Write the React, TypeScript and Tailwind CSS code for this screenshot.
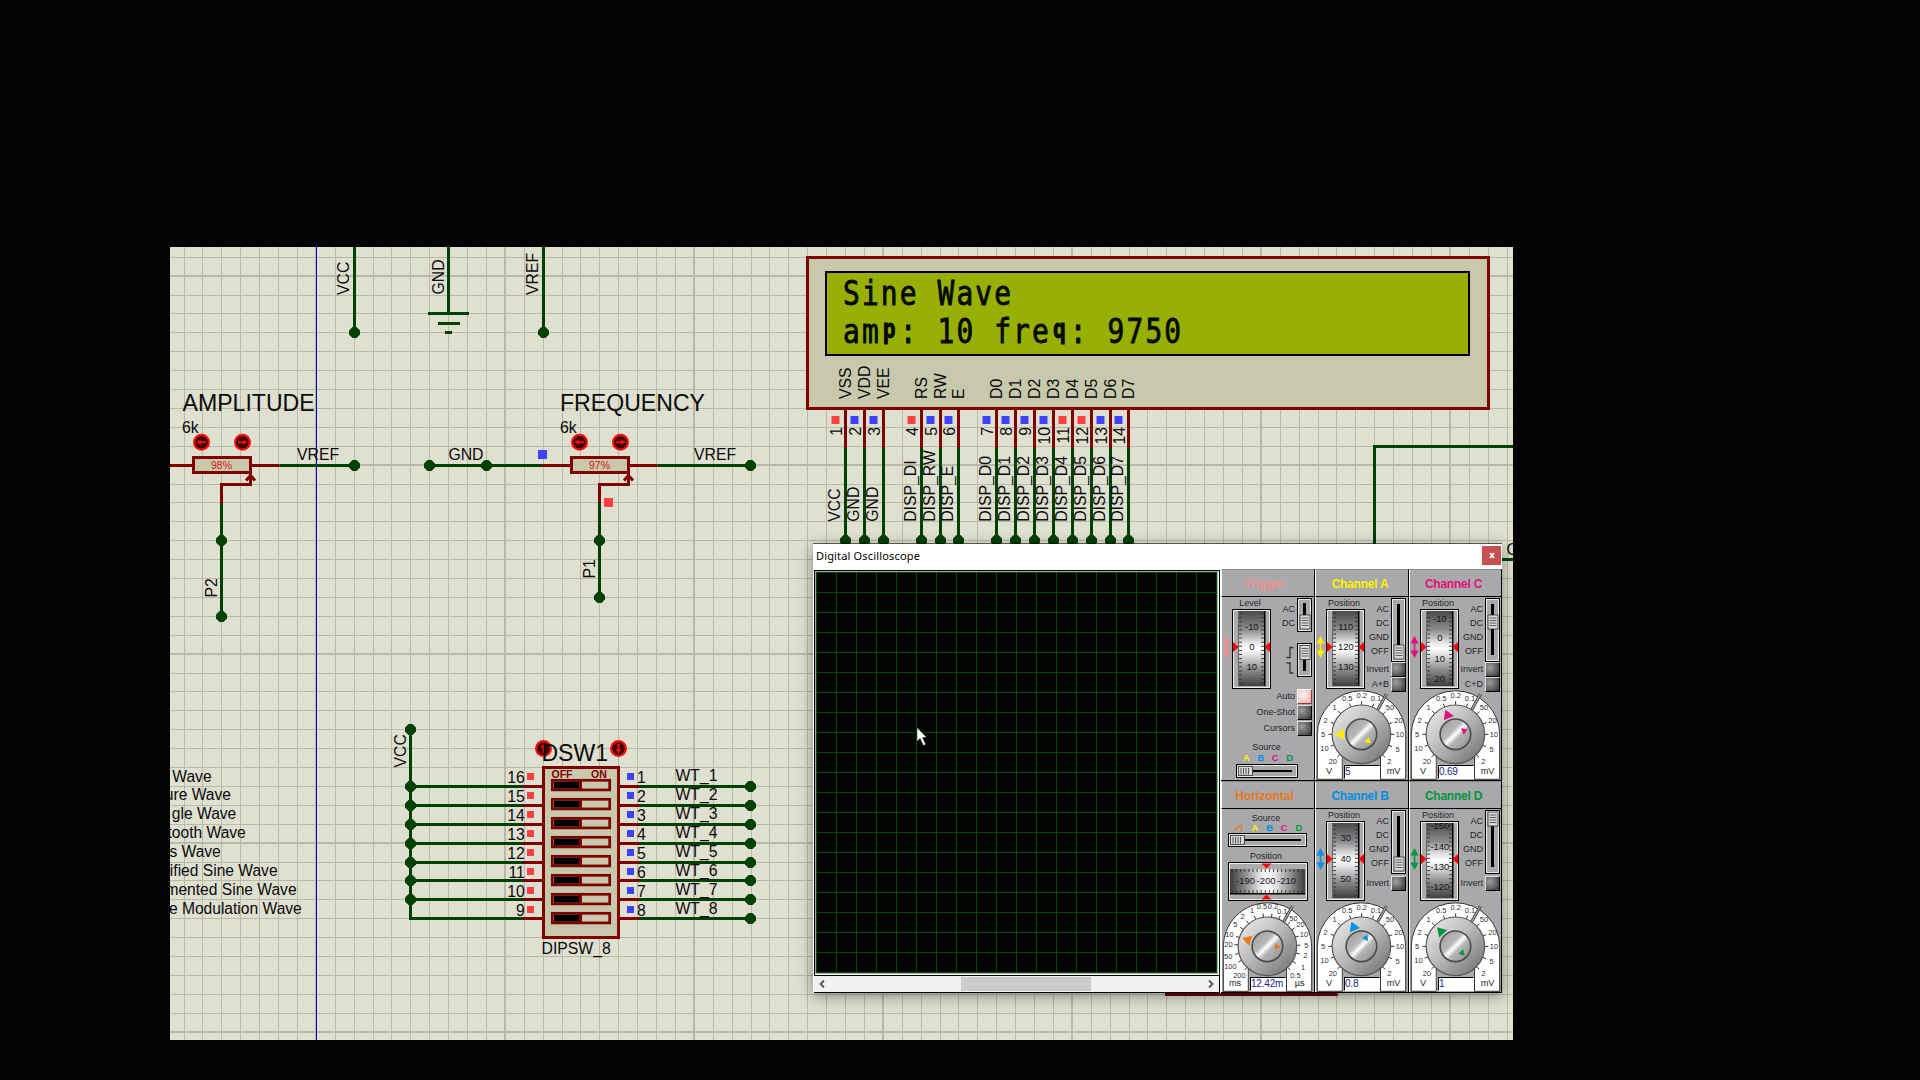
import React from "react";

const WIRE = "#004000";
const COMP = "#800000";
const BODY = "#c8c8ac";
const HI = "#ff4040";
const LO = "#4040ff";

/* ---------- schematic primitives ---------- */

type LabelProps = {
  x: number;
  y: number;
  children: string;
  size?: number;
  up?: boolean;
  anchor?: "start" | "middle" | "end";
  fill?: string;
  bold?: boolean;
};

function Label({ x, y, children, size = 15.8, up, anchor = "start", fill = "#0a0a0a", bold }: LabelProps) {
  return (
    <text
      x={x}
      y={y}
      fontSize={size}
      fill={fill}
      textAnchor={anchor}
      fontWeight={bold ? 700 : 400}
      transform={up ? `rotate(-90 ${x} ${y})` : undefined}
    >
      {children}
    </text>
  );
}

function Wire({ d, color = WIRE }: { d: string; color?: string }) {
  return <path d={d} fill="none" stroke={color} strokeWidth={3} />;
}

function Dot({ x, y }: { x: number; y: number }) {
  return <path d={`M${x - 2} ${y - 5.5}h4l3.5 3.5v4l-3.5 3.5h-4l-3.5 -3.5v-4z`} fill={WIRE} />;
}

function Probe({ x, y, high, s = 8 }: { x: number; y: number; high?: boolean; s?: number }) {
  return <rect x={x} y={y} width={s} height={s} fill={high ? HI : LO} />;
}

function Actuator({ x, y, turn }: { x: number; y: number; turn: number }) {
  return (
    <g>
      <circle cx={x} cy={y} r={7.4} fill="#3c0606" stroke="#ff0a0a" strokeWidth={2.2} />
      <g transform={`rotate(${turn} ${x} ${y})`}>
        <path d={`M${x - 4.5} ${y}h6`} stroke="#ff0a0a" strokeWidth={2} fill="none" />
        <path d={`M${x + 0.8} ${y - 2.8}l4.2 2.8l-4.2 2.8z`} fill="#ff0a0a" />
      </g>
    </g>
  );
}

const GX = [0, 19, 38, 57, 75, 94, 113, 132, 151, 170];
const GY = [0, 19, 37, 56, 75, 94, 113, 132, 151, 170];

function Grid() {
  const out: React.ReactElement[] = [];
  for (let b = 127; b < 1520; b += 189)
    GX.forEach((o, i) => {
      const x = b + o;
      if (x < 170 || x > 1513) return;
      out.push(<rect key={`v${x}`} x={i ? x : x - 1} y={247} width={i ? 1 : 2} height={793} fill="#b9b9a9" />);
    });
  for (let b = 87; b < 1045; b += 189)
    GY.forEach((o, i) => {
      const y = b + o;
      if (y < 247 || y > 1040) return;
      out.push(<rect key={`h${y}`} y={i ? y : y - 1} x={170} height={i ? 1 : 2} width={1343} fill="#b9b9a9" />);
    });
  return <g>{out}</g>;
}

function Pot({ x, name, pct, nameX }: { x: number; name: string; pct: string; nameX: number }) {
  return (
    <g>
      <Wire color={COMP} d={`M${x - 29} 465.5H${x + 58}`} />
      <rect x={x - 28} y={457.5} width={57} height={15} fill={BODY} stroke={COMP} strokeWidth={3} />
      <Label x={x} y={469} size={10.5} anchor="middle" fill="#d81414">{pct}</Label>
      <Wire color={COMP} d={`M${x} 504V484.5H${x + 29}V474M${x + 24.5} 480.5L${x + 29} 475.5L${x + 33.5} 480.5`} />
      <Label x={nameX} y={410.6} size={23.1}>{name}</Label>
      <Label x={x - 39.5} y={433}>6k</Label>
      <Actuator x={x - 20} y={442.3} turn={180} />
      <Actuator x={x + 21} y={442.3} turn={0} />
    </g>
  );
}

const LCD_PINS: [number, string, string, boolean][] = [
  [845.5, "VSS", "VCC", true],
  [864.5, "VDD", "GND", false],
  [883.5, "VEE", "GND", false],
  [921.5, "RS", "DISP_DI", true],
  [940.5, "RW", "DISP_RW", false],
  [958.5, "E", "DISP_E", false],
  [996.5, "D0", "DISP_D0", false],
  [1015.5, "D1", "DISP_D1", false],
  [1034.5, "D2", "DISP_D2", false],
  [1053.5, "D3", "DISP_D3", false],
  [1072.5, "D4", "DISP_D4", true],
  [1091.5, "D5", "DISP_D5", true],
  [1110.5, "D6", "DISP_D6", false],
  [1128.5, "D7", "DISP_D7", false],
];

function LcdLine({ y, text }: { y: number; text: string }) {
  const k = 0.82;
  return (
    <text
      transform={`translate(851.4 ${y}) scale(${k} 1)`}
      fontSize={34}
      textAnchor="middle"
      fill="#050a00"
      stroke="#050a00"
      strokeWidth={0.9}
      className="font-['DejaVu_Sans_Mono',monospace]"
    >
      {text.split("").map((c, i) => {
        const low = c === "p" || c === "q";
        return (
          <tspan key={i} x={(i * 18.9) / k} y={low ? -5 : 0} fontSize={low ? 26 : 34} fontWeight={low ? 700 : 400}>
            {c}
          </tspan>
        );
      })}
    </text>
  );
}

function Lcd() {
  return (
    <g>
      <rect x={807.5} y={257.5} width={681} height={151} fill={BODY} stroke={COMP} strokeWidth={3} />
      <rect x={826} y={272} width={643} height={83} fill="#98b004" stroke="#000" strokeWidth={2} />
      <LcdLine y={304.6} text="Sine Wave" />
      <LcdLine y={342.6} text="amp: 10 freq: 9750" />
      {LCD_PINS.map(([x, pin, net, high], i) => (
        <g key={x}>
          <Wire color={COMP} d={`M${x} 410V448`} />
          <Wire d={`M${x} 448V540`} />
          <Dot x={x} y={540.5} />
          <Probe x={x - 14} y={416} high={high} />
          <Label up x={x + 5.4} y={399}>{pin}</Label>
          <Label up x={x - 3.4} y={427} anchor="end">{String(i + 1)}</Label>
          <Label up x={x - 5.6} y={521.8}>{net}</Label>
        </g>
      ))}
    </g>
  );
}

const ROWS = [786.5, 805.5, 824.5, 843.5, 862.5, 880.5, 899.5, 918.5];

function DipSwitch() {
  return (
    <g>
      <Wire d="M410.5 729V920" />
      <Dot x={410.5} y={729.5} />
      {ROWS.map((y, i) => {
        const t = Math.round(i * 18.95);
        return (
          <g key={y}>
            <Wire d={`M409 ${y}H524M638 ${y}H750`} />
            <Wire color={COMP} d={`M523 ${y}H543M619 ${y}H639`} />
            {i < 7 && <Dot x={410.5} y={y} />}
            <Dot x={750.5} y={y} />
            <Label x={524.8} y={782.6 + t} anchor="end">{String(16 - i)}</Label>
            <Probe x={527} y={773 + t} s={7} high />
            <Probe x={627} y={773 + t} s={7} />
            <Label x={637} y={782.6 + t}>{String(i + 1)}</Label>
            <Label x={675.4} y={780.6 + t}>{`WT_${i + 1}`}</Label>
          </g>
        );
      })}
      <rect x={543.5} y={767.5} width={75} height={170} fill={BODY} stroke={COMP} strokeWidth={3} />
      <Label x={551.5} y={778} size={10.5} fill={COMP} bold>OFF</Label>
      <Label x={591} y={778} size={10.5} fill={COMP} bold>ON</Label>
      {ROWS.map((y, i) => {
        const t = 779 + Math.round(i * 18.95);
        return (
          <g key={y}>
            <rect x={552.3} y={t + 1.3} width={57.4} height={9.6} fill={BODY} stroke={COMP} strokeWidth={2.7} />
            <rect x={554} y={t + 2.6} width={25} height={7} fill="#000" />
            <rect x={579} y={t + 1} width={3} height={10} fill={COMP} />
          </g>
        );
      })}
      <Actuator x={543.5} y={748.5} turn={-90} />
      <Actuator x={618.5} y={748.5} turn={90} />
      <Label x={541.5} y={760.8} size={23}>DSW1</Label>
      <Label x={541.5} y={954}>DIPSW_8</Label>
      <Label up x={406} y={767.5}>VCC</Label>
    </g>
  );
}

const NOTES: [string, number, number][] = [
  ["Wave", 211.6, 781.7],
  ["ure Wave", 231, 800.2],
  ["gle Wave", 236.3, 819.2],
  ["tooth Wave", 245.8, 838.2],
  ["s Wave", 220.8, 857.2],
  ["ified Sine Wave", 277.6, 876.2],
  ["mented Sine Wave", 296.6, 894.7],
  ["e Modulation Wave", 301.8, 913.6],
];

function Schematic() {
  return (
    <svg viewBox="170 247 1343 793" className="block h-[793px] w-[1343px] font-['Liberation_Sans',Arial,sans-serif]">
      <rect x={170} y={247} width={1343} height={793} fill="#e0e0d1" />
      <Grid />
      <rect x={316} y={247} width={1} height={793} fill="#0000c0" />

      <Wire d="M354.5 247V332" />
      <Dot x={354.5} y={332.5} />
      <Label up x={349.2} y={295}>VCC</Label>
      <Wire d="M448.5 247V313M428 313.5H469M438 323.5H460M445 332.5H452" />
      <Label up x={443.8} y={294.5}>GND</Label>
      <Wire d="M543.5 247V332" />
      <Dot x={543.5} y={332.5} />
      <Label up x={538.2} y={295}>VREF</Label>

      <Wire color={COMP} d="M170 465.5H193" />
      <Pot x={221.5} name="AMPLITUDE" nameX={182.5} pct="98%" />
      <Wire d="M279.5 465.5H354M221.5 503.5V616" />
      <Dot x={354.5} y={465.5} />
      <Dot x={221.5} y={540.5} />
      <Dot x={221.5} y={616.5} />
      <Label x={297} y={459.6}>VREF</Label>
      <Label up x={217.2} y={597.4}>P2</Label>

      <Wire d="M429.5 465.5H542" />
      <Wire color={COMP} d="M542 465.5H571" />
      <Dot x={429.5} y={465.5} />
      <Dot x={486.5} y={465.5} />
      <Label x={448.4} y={459.6}>GND</Label>
      <Probe x={538} y={450} s={9} />
      <Pot x={599.5} name="FREQUENCY" nameX={560} pct="97%" />
      <Wire d="M657.5 465.5H750M599.5 503.5V597" />
      <Dot x={750.5} y={465.5} />
      <Dot x={599.5} y={540.5} />
      <Dot x={599.5} y={597.5} />
      <Probe x={604} y={498} s={9} high />
      <Label x={694} y={459.6}>VREF</Label>
      <Label up x={595} y={578.6}>P1</Label>

      {NOTES.map(([s, x, y]) => (
        <Label key={s} x={x} y={y} size={15.6} anchor="end">{s}</Label>
      ))}
      <DipSwitch />
      <Lcd />

      <Wire d="M1374.5 560V446.5H1513M1500 559.5H1513" />
      <Label x={1506.5} y={555}>C</Label>
      <rect x={1165} y={992} width={173} height={4} fill="#70000c" />
    </svg>
  );
}

/* ---------- oscilloscope controls ---------- */

const YEL = "#fff000";
const BLU = "#0090e4";
const MAG = "#e0107c";
const GRN = "#009640";
const ORA = "#e87a1e";
const PNK = "#f09090";

function Slider({ h, at, from = 6, to }: { h: number; at: number; from?: number; to?: number }) {
  return (
    <svg width={15} height={h} className="block shrink-0">
      <rect x={0.5} y={0.5} width={14} height={h - 1} fill="#a9a9a9" stroke="#000" />
      <path d={`M1.5 ${h - 1.5}V1.5H13.5V${h - 1.5}Z`} fill="none" stroke="#e8e8e8" />
      <rect x={6} y={from} width={3} height={(to ?? h - 7) - from} fill="#000" />
      <rect x={3} y={at} width={10} height={14} fill="#d8d8d8" stroke="#333" strokeWidth={0.8} />
      {[3, 5.5, 8, 10.5].map((o) => (
        <path key={o} d={`M4.5 ${at + o}h7`} stroke="#555" strokeWidth={0.9} />
      ))}
    </svg>
  );
}

function HSlider({ w, h = 14 }: { w: number; h?: number }) {
  return (
    <svg width={w} height={h} className="block shrink-0">
      <rect x={0.5} y={0.5} width={w - 1} height={h - 1} fill="#a9a9a9" stroke="#000" />
      <rect x={1.5} y={1.5} width={w - 3} height={h - 3} fill="none" stroke="#e8e8e8" />
      <rect x={14} y={6} width={w - 20} height={2} fill="#000" />
      <rect x={2.5} y={2.5} width={14} height={9} fill="#d8d8d8" stroke="#333" strokeWidth={0.8} />
      {[5, 7.5, 10, 12.5].map((o) => (
        <path key={o} d={`M${o} 4v6.5`} stroke="#444" strokeWidth={0.9} />
      ))}
    </svg>
  );
}

function PushButton({ lit }: { lit?: boolean }) {
  return (
    <span
      className={
        lit
          ? "block h-[15px] w-[15px] shrink-0 border border-r-[#804040] border-b-[#804040] border-t-white border-l-white bg-[radial-gradient(circle_at_40%_40%,#fff4f4,#f4a8a8)]"
          : "block h-[15px] w-[15px] shrink-0 border border-t-[#e0e0e0] border-l-[#e0e0e0] border-r-black border-b-black bg-[radial-gradient(circle_at_30%_35%,#a0a0a0,#3c3c3c_90%)]"
      }
    />
  );
}

function ButtonRow({ label, lit }: { label: string; lit?: boolean }) {
  return (
    <div className="flex h-4 items-center justify-end gap-[2px] pr-[2px] leading-none">
      <span className="whitespace-nowrap">{label}</span>
      <PushButton lit={lit} />
    </div>
  );
}

function DoubleArrow({ color }: { color: string }) {
  return (
    <svg width={9} height={24} className="mt-[26px] ml-[1px] block shrink-0">
      <path d="M4.5 4V20" stroke={color} strokeWidth={1.6} />
      <path d="M4.5 1L8.5 8.5H.5ZM4.5 23L8.5 15.5H.5Z" fill={color} />
    </svg>
  );
}

function Wheel({ marks }: { marks: [string, number][] }) {
  const id = React.useId();
  return (
    <svg width={39} height={80} className="ml-[1px] block shrink-0">
      <defs>
        <linearGradient id={id} x1="0" y1="0" x2="0" y2="1">
          <stop offset="0" stopColor="#4a4a4a" />
          <stop offset=".25" stopColor="#8c8c8c" />
          <stop offset=".42" stopColor="#e4e4e4" />
          <stop offset=".5" stopColor="#ffffff" />
          <stop offset=".58" stopColor="#e4e4e4" />
          <stop offset=".78" stopColor="#8c8c8c" />
          <stop offset="1" stopColor="#404040" />
        </linearGradient>
      </defs>
      <rect x={0.5} y={0.5} width={38} height={79} fill="#acacac" stroke="#000" />
      <rect x={1.5} y={1.5} width={36} height={77} fill="none" stroke="#eee" />
      <rect x={7} y={2} width={25} height={75} fill={`url(#${id})`} />
      <rect x={6} y={2} width={1} height={75} fill="#666" />
      <rect x={32} y={2} width={1.5} height={75} fill="#000" />
      {Array.from({ length: 18 }, (_, i) => (
        <path key={i} d={`M7 ${4.5 + i * 4.1}h3M29 ${4.5 + i * 4.1}h3`} stroke="#333" strokeWidth={0.9} />
      ))}
      {marks.map(([m, y]) => (
        <text key={m} x={19.8} y={y - 12 + 2.9} fontSize={9.4} textAnchor="middle" fill="#14141e">
          {m}
        </text>
      ))}
      <path d="M1 33L6.5 38L1 43ZM38 33L32.5 38L38 43Z" fill="#ff0000" />
    </svg>
  );
}

const VOLT: [string, number, number][] = [
  ["0.1", 61, 101], ["0.2", 46.7, 98.3], ["0.5", 32.3, 101.3], ["1", 19.5, 110.3], ["2", 10.7, 123.3],
  ["5", 8, 137.3], ["10", 9.4, 151.7], ["20", 17.8, 164.4], ["50", 75, 110.7], ["20", 83.4, 123.4],
  ["10", 85, 137.3], ["5", 82.7, 152], ["2", 74.4, 164.4],
];

const TIME: [string, number, number][] = [
  ["0.5", 41, 97.4], ["0.2", 52, 97.4], ["0.1", 61.2, 102], ["1", 31, 101.7], ["2", 21.7, 107.4],
  ["5", 14.4, 115], ["10", 8.4, 125.4], ["20", 7.4, 135.4], ["50", 7.2, 147], ["100", 9.4, 157.4],
  ["200", 18.4, 166.4], ["50", 72.4, 109.4], ["20", 79.4, 115], ["10", 83, 125.4], ["5", 85.4, 136],
  ["2", 84.4, 146.4], ["1", 82, 158.4], ["0.5", 74.4, 166.4],
];

type DialProps = {
  labels: [string, number, number][];
  color: string;
  outer: number;
  inner: number;
  value: string;
  units: [string, string];
};

function Dial({ labels, color, outer, inner, value, units }: DialProps) {
  const id = React.useId();
  const cx = 46.4;
  const cy = 137.3;
  return (
    <div className="relative h-[90px] w-[93px]">
      <svg viewBox="0 93 93 90" width={93} height={90} className="block">
        <defs>
          <linearGradient id={id + "k"} x1="0" y1="0" x2="1" y2="1">
            <stop offset="0" stopColor="#f2f2f2" />
            <stop offset=".45" stopColor="#bcbcbc" />
            <stop offset="1" stopColor="#6a6a6a" />
          </linearGradient>
          <linearGradient id={id + "i"} x1="0" y1="0" x2="1" y2="1">
            <stop offset="0" stopColor="#9a9a9a" />
            <stop offset=".4" stopColor="#b8b8b8" />
            <stop offset=".5" stopColor="#ffffff" />
            <stop offset=".6" stopColor="#b4b4b4" />
            <stop offset="1" stopColor="#8c8c8c" />
          </linearGradient>
        </defs>
        <path
          d="M2.3 182.3V137.6A44.2 43.8 0 0 1 90.7 137.6V182.3H65.5V160H27.3V182.3Z"
          fill="#fff"
          stroke="#333"
          strokeWidth={1}
        />
        <path d="M27.8 158H65V183H27.8Z" fill="#a9a9a9" />
        <path d="M62.3 113.5L71.5 97" stroke="#444" strokeWidth={3} />
        <path d="M62.3 113.5L71.5 97" stroke="#aaa" strokeWidth={1.2} />
        {labels.map(([t, x, y], i) => {
          const a = Math.atan2(y - cy, x - cx);
          const c = Math.cos(a);
          const s = Math.sin(a);
          return (
            <g key={i}>
              <path d={`M${cx + 29 * c} ${cy + 29 * s}L${cx + 33 * c} ${cy + 33 * s}`} stroke="#333" strokeWidth={1} />
              <text x={x} y={y + 2.5} fontSize={7.5} textAnchor="middle" fill="#303030">{t}</text>
            </g>
          );
        })}
        <circle cx={cx} cy={cy} r={29.3} fill={`url(#${id}k)`} stroke="#555" strokeWidth={1.2} />
        <circle cx={cx} cy={cy} r={15.3} fill={`url(#${id}i)`} stroke="#4a4a4a" strokeWidth={1.6} />
        <path transform={`translate(${cx} ${cy}) rotate(${outer})`} d="M26.5 0L17.5 -5.5V5.5Z" fill={color} />
        <path transform={`translate(${cx} ${cy}) rotate(${inner})`} d="M13 0L7.5 -3.4V3.4Z" fill={color} />
        <text x={14} y={177} fontSize={9.2} textAnchor="middle" fill="#282828">{units[0]}</text>
        <text x={78.6} y={177} fontSize={9.2} textAnchor="middle" fill="#282828">{units[1]}</text>
      </svg>
      <div className="absolute top-[75px] left-[29px] flex h-[14px] w-[36px] items-center border border-t-black border-l-black border-r-white border-b-white bg-white text-[10px] leading-none tracking-[-0.2px] whitespace-nowrap text-[#20208c]">
        {value}
      </div>
    </div>
  );
}

function Panel({ title, color, children, tight }: { title: string; color: string; children: React.ReactNode; tight?: boolean }) {
  return (
    <section className="flex h-[212px] flex-col border-r border-b border-black bg-[#a9a8aa]">
      <h2
        className={`flex h-7 shrink-0 items-center justify-center border-t border-b border-l border-t-[#8c8c8c] border-b-black border-l-white pt-px text-[12px] leading-none font-bold whitespace-nowrap ${tight ? "pr-[4px] tracking-[-0.25px]" : "pr-[7px] tracking-normal"}`}
        style={{ color }}
      >
        {title}
      </h2>
      <div className="h-[183px] border-l border-white">
        <div className="-ml-px w-[93px]">{children}</div>
      </div>
    </section>
  );
}

function WheelColumn({ label, color, marks }: { label: string; color: string; marks: [string, number][] }) {
  return (
    <div className="w-[50px] shrink-0">
      <div className="flex h-3 items-center pl-[13px] leading-none">
        <span className="flex w-8 justify-center">{label}</span>
      </div>
      <div className="flex">
        <DoubleArrow color={color} />
        <Wheel marks={marks} />
      </div>
    </div>
  );
}

type ChannelProps = {
  title: string;
  color: string;
  marks: [string, number][];
  coupling: number;
  extra?: string;
  outer: number;
  inner: number;
  value: string;
};

function Channel({ title, color, marks, coupling, extra, outer, inner, value }: ChannelProps) {
  return (
    <Panel title={title} color={color} tight>
      <div className="flex h-[93px]">
        <WheelColumn label="Position" color={color} marks={marks} />
        <div className="relative z-10 flex flex-1 flex-col">
          <div className="flex h-[66px] justify-end gap-[2px] pt-px pr-[2px]">
            <div className="flex flex-col pt-[4px] text-right">
              {["AC", "DC", "GND", "OFF"].map((s) => (
                <span key={s} className="h-[14px] leading-[14px]">{s}</span>
              ))}
            </div>
            <Slider h={64} at={coupling} />
          </div>
          <ButtonRow label="Invert" />
          {extra && <ButtonRow label={extra} />}
        </div>
      </div>
      <Dial labels={VOLT} color={color} outer={outer} inner={inner} value={value} units={["V", "mV"]} />
    </Panel>
  );
}

function SourceLetters({ gap }: { gap: string }) {
  return (
    <div className={`flex justify-center text-[9.5px] leading-none font-bold ${gap}`}>
      <span className="text-[#fff000]">A</span>
      <span className="text-[#0090e4]">B</span>
      <span className="text-[#e0107c]">C</span>
      <span className="text-[#009640]">D</span>
    </div>
  );
}

function Trigger() {
  return (
    <Panel title="Trigger" color={PNK}>
      <div className="flex h-[91px]">
        <WheelColumn label="Level" color={PNK} marks={[["-10", 29.7], ["0", 50], ["10", 70]]} />
        <div className="flex flex-1 flex-col">
          <div className="flex h-[46px] justify-end gap-[2px] pt-px pr-[2px]">
            <div className="flex flex-col pt-[4px] text-right">
              <span className="h-[14px] leading-[14px]">AC</span>
              <span className="h-[14px] leading-[14px]">DC</span>
            </div>
            <Slider h={34} at={17} from={5} to={28} />
          </div>
          <div className="flex justify-end gap-[3px] pr-[2px]">
            <svg width={8} height={34} className="block">
              <path d="M.5 14.5H4V4.5H7.5M.5 20H4V30H7.5" fill="none" stroke="#333" strokeWidth={1.3} />
            </svg>
            <Slider h={34} at={2.5} from={8} to={28} />
          </div>
        </div>
      </div>
      <div>
        <ButtonRow label="Auto" lit />
        <ButtonRow label="One-Shot" />
        <ButtonRow label="Cursors" />
      </div>
      <div className="pt-[6px] pr-[2px] text-center leading-[10px]">Source</div>
      <div className="pt-[1px] pl-[1px]">
        <SourceLetters gap="gap-[7.5px]" />
      </div>
      <div className="flex pt-[1px] pl-[15px]">
        <HSlider w={62} />
      </div>
    </Panel>
  );
}

function HorizontalWheel() {
  const id = React.useId();
  return (
    <svg width={80} height={39} className="block">
      <defs>
        <linearGradient id={id}>
          <stop offset="0" stopColor="#3c3c3c" />
          <stop offset=".2" stopColor="#8a8a8a" />
          <stop offset=".4" stopColor="#e4e4e4" />
          <stop offset=".5" stopColor="#ffffff" />
          <stop offset=".6" stopColor="#e4e4e4" />
          <stop offset=".82" stopColor="#8a8a8a" />
          <stop offset="1" stopColor="#3c3c3c" />
        </linearGradient>
      </defs>
      <rect x={0.5} y={0.5} width={79} height={38} fill="#acacac" stroke="#000" />
      <rect x={1.5} y={1.5} width={77} height={36} fill="none" stroke="#eee" />
      <rect x={2} y={7} width={75} height={24} fill={`url(#${id})`} />
      <rect x={2} y={31} width={75} height={1.5} fill="#000" />
      {Array.from({ length: 18 }, (_, i) => (
        <path key={i} d={`M${4.5 + i * 4.1} 7v3M${4.5 + i * 4.1} 28v3`} stroke="#333" strokeWidth={0.9} />
      ))}
      {([["-190", 17.5], ["-200", 38], ["-210", 58.5]] as [string, number][]).map(([t, x]) => (
        <text key={t} x={x} y={22} fontSize={9.4} textAnchor="middle" fill="#14141e">{t}</text>
      ))}
      <path d="M33.5 1.5H43.5L38.5 6.5ZM33.5 37.5H43.5L38.5 32.5Z" fill="#ff0000" />
    </svg>
  );
}

function Horizontal() {
  return (
    <Panel title="Horizontal" color={ORA}>
      <div className="h-[93px]">
        <div className="pt-[4px] pr-[3px] text-center leading-[10px]">Source</div>
        <div className="flex items-center gap-[7.5px] pl-[12px] leading-none">
          <svg width={11} height={8} className="block">
            <path d="M.5 6.5L8.5 1V7.5" fill="none" stroke={ORA} strokeWidth={1.3} />
          </svg>
          <SourceLetters gap="gap-[7.8px]" />
        </div>
        <div className="pl-[7px]">
          <HSlider w={79} />
        </div>
        <div className="pt-[4px] pr-[3px] text-center leading-[10px]">Position</div>
        <div className="pt-[1px] pl-[7px]">
          <HorizontalWheel />
        </div>
      </div>
      <Dial labels={TIME} color={ORA} outer={-162} inner={2} value="12.42m" units={["ms", "µs"]} />
    </Panel>
  );
}

function Screen() {
  const n = Array.from({ length: 21 }, (_, i) => i * 20);
  return (
    <svg width={401} height={401} className="block bg-[#020203]">
      {n.map((v) => (
        <g key={v} fill="#004a08">
          <rect x={v} y={0} width={1} height={401} />
          <rect x={0} y={v} width={401} height={1} />
        </g>
      ))}
    </svg>
  );
}

function Oscilloscope() {
  return (
    <div className="absolute top-[297px] left-[643px] flex h-[449px] w-[689px] flex-col bg-white font-['Liberation_Sans',Arial,sans-serif] text-[9px] text-[#242424] shadow-[0_3px_14px_rgba(0,0,0,0.42),0_-1px_0_rgba(0,0,0,0.55)]">
      <header className="flex h-[25px] shrink-0 items-center justify-between pr-px pl-[3px]">
        <span className="pb-[3px] font-['Noto_Sans','Open_Sans',sans-serif] text-[11px] leading-none tracking-[0.16px] text-black">
          Digital Oscilloscope
        </span>
        <button className="mb-[2px] flex h-[19px] w-[19px] items-center justify-center bg-[#c75050] text-white">
          <svg width={6} height={7} viewBox="0 0 6 7" className="block">
            <path d="M1 1L5 6M5 1L1 6" stroke="#fff" strokeWidth={1.6} />
          </svg>
        </button>
      </header>
      <div className="flex flex-1">
        <div className="w-[407px] shrink-0 pt-px pl-px">
          <div className="border border-black">
            <div className="border-r border-b border-white">
              <div className="border border-[#a8a8a8]">
                <Screen />
              </div>
            </div>
          </div>
          <div className="flex h-[17px] items-center justify-between border-r border-b border-black bg-[#f1f1f2] px-[5px]">
            <svg width={6} height={8} className="block">
              <path d="M5 .5L1.5 4L5 7.5" fill="none" stroke="#505050" strokeWidth={1.8} />
            </svg>
            <div className="mr-[-18px] h-[14px] w-[130px] bg-[#cbcccd]" />
            <svg width={6} height={8} className="block">
              <path d="M1 .5L4.5 4L1 7.5" fill="none" stroke="#505050" strokeWidth={1.8} />
            </svg>
          </div>
        </div>
        <div className="ml-px grid flex-1 grid-cols-[94px_94px_93px] grid-rows-[212px_212px]">
          <Trigger />
          <Channel title="Channel A" color={YEL} marks={[["110", 29.7], ["120", 50], ["130", 70]]} coupling={47} extra="A+B" outer={180} inner={45} value="5" />
          <Channel title="Channel C" color={MAG} marks={[["-10", 22], ["0", 41.3], ["10", 61.7], ["20", 81.7]]} coupling={17} extra="C+D" outer={-112} inner={-22} value="0.69" />
          <Horizontal />
          <Channel title="Channel B" color={BLU} marks={[["30", 29.5], ["40", 50], ["50", 70]]} coupling={47} outer={-112} inner={-62} value="0.8" />
          <Channel title="Channel D" color={GRN} marks={[["-150", 17.5], ["-140", 37.7], ["-130", 57.7], ["-120", 77.7]]} coupling={2} outer={-134} inner={45} value="1" />
        </div>
      </div>
    </div>
  );
}

function Pointer() {
  return (
    <svg width={12} height={20} viewBox="0 0 12 20" className="absolute top-[480px] left-[746px]">
      <path d="M1 .5V14.5L4 11.5L7.3 18.6L9.8 17.4L6.6 10.6H10.8Z" fill="#fff" stroke="#111" strokeWidth={0.5} />
    </svg>
  );
}

export default function App() {
  return (
    <div className="h-[1080px] w-[1920px] overflow-hidden bg-[#020204] pt-[247px] pl-[170px]">
      <main className="relative h-[793px] w-[1343px] overflow-hidden">
        <Schematic />
        <Oscilloscope />
        <Pointer />
      </main>
    </div>
  );
}
